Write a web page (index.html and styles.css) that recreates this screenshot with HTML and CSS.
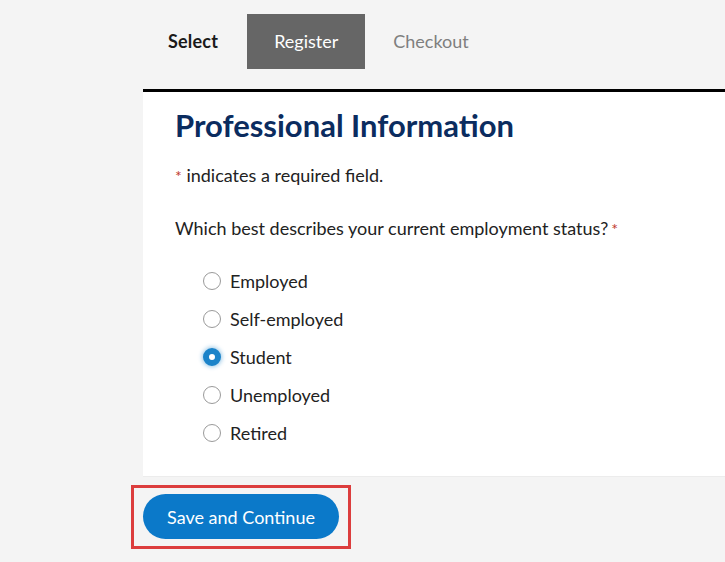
FILE: index.html
```html
<!DOCTYPE html>
<html lang="en">
<head>
<meta charset="utf-8">
<title>Professional Information</title>
<link rel="stylesheet" href="styles.css">
</head>
<body>
<div class="page">
  <nav class="steps">
    <span class="step step-done">Select</span>
    <span class="step step-active">Register</span>
    <span class="step step-next">Checkout</span>
  </nav>
  <section class="panel">
    <h1 class="title">Professional Information</h1>
    <p class="note"><span class="req">*</span> indicates a required field.</p>
    <p class="question">Which best describes your current employment status?<span class="req req-q">*</span></p>
    <ul class="options">
      <li class="option"><span class="radio"></span><span class="label">Employed</span></li>
      <li class="option"><span class="radio"></span><span class="label">Self-employed</span></li>
      <li class="option"><span class="radio radio-on"></span><span class="label">Student</span></li>
      <li class="option"><span class="radio"></span><span class="label">Unemployed</span></li>
      <li class="option"><span class="radio"></span><span class="label">Retired</span></li>
    </ul>
  </section>
  <div class="actions">
    <div class="highlight">
      <button class="btn" type="button">Save and Continue</button>
    </div>
  </div>
</div>
</body>
</html>
```
FILE: styles.css
```css
html, body {
  margin: 0;
  padding: 0;
  background: #f4f4f4;
  font-family: Lato, "Open Sans", "Liberation Sans", sans-serif;
  color: #222;
}

body {
  overflow: hidden;
}

.page {
  margin-left: 143px;
}

.steps {
  display: flex;
  padding-top: 14px;
  margin-bottom: 20px;
}

.step {
  display: block;
  height: 55px;
  line-height: 55px;
  padding: 0 27px;
  font-size: 18px;
}

.step-done {
  padding-left: 25px;
  padding-right: 29px;
  font-weight: 700;
  letter-spacing: 0.2px;
  color: #1a1a1a;
}

.step-active {
  background: #666;
  color: #fff;
}

.step-next {
  padding-left: 28px;
  color: #7f7f7f;
}

.panel {
  background: #fff;
  border-top: 3px solid #000;
  padding: 15px 0 24px 32px;
  border-bottom: 1px solid #ececec;
}

.title {
  margin: 0;
  font-size: 31px;
  line-height: 36px;
  font-weight: 700;
  color: #0b2c5f;
}

.note {
  margin: 20px 0 0;
  font-size: 18px;
  line-height: 24px;
}

.req {
  color: #c0392b;
  font-size: 16px;
}

.req-q {
  margin-left: 3px;
}

.question {
  margin: 28px 0 0;
  font-size: 18px;
  line-height: 24px;
}

.options {
  list-style: none;
  margin: 21px 0 0;
  padding: 0 0 0 28px;
}

.option {
  display: flex;
  align-items: center;
  height: 38px;
  font-size: 18px;
}

.radio {
  box-sizing: border-box;
  width: 18px;
  height: 18px;
  border-radius: 50%;
  border: 1px solid #9a9a9a;
  background: #fff;
  margin-right: 9px;
  flex: none;
}

.radio-on {
  border: 6px solid #1b83c9;
  background: #fff;
  box-shadow: 0 0 4px 1px rgba(27, 131, 201, 0.45);
}

.actions {
  padding-top: 8px;
}

.highlight {
  display: inline-block;
  margin-left: -12px;
  border: 3px solid #dc3d3d;
  padding: 6px 9px 7px 9px;
}

.btn {
  display: block;
  width: 196px;
  height: 45px;
  border: 0;
  border-radius: 23px;
  background: #0b79c9;
  color: #fff;
  font-family: Lato, "Open Sans", "Liberation Sans", sans-serif;
  font-size: 18px;
  cursor: pointer;
}
```
